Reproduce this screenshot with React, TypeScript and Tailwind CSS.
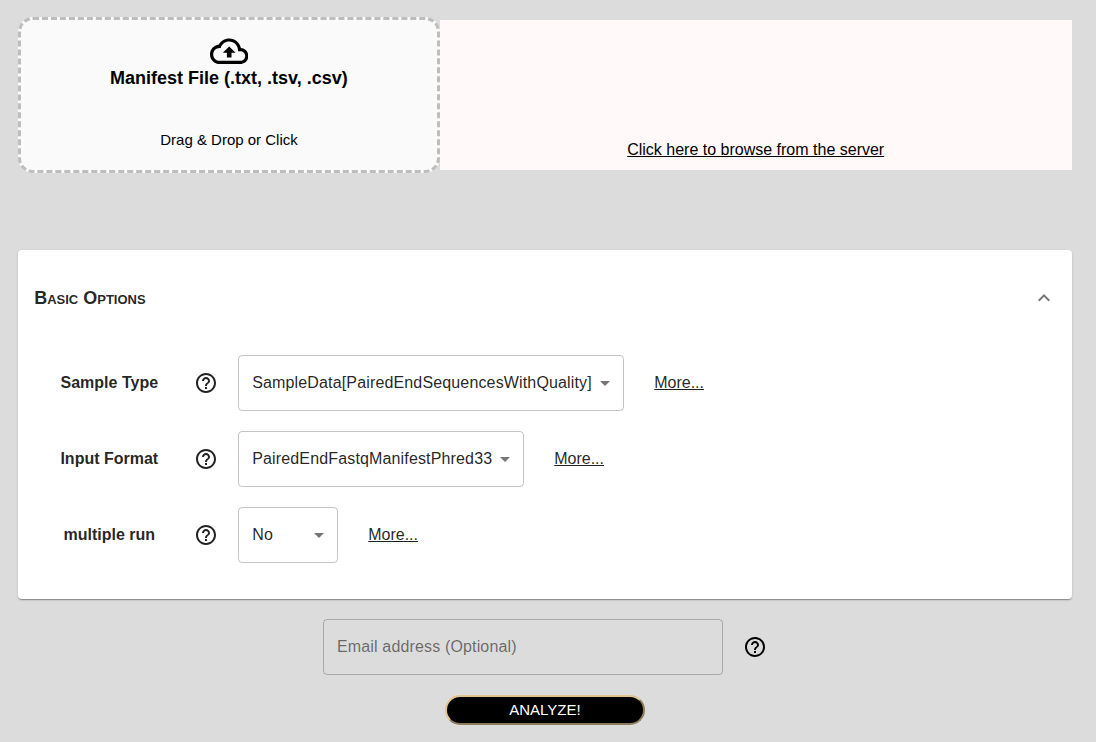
import React from "react";

function Icon({ d, className }: { d: string; className: string }) {
  return (
    <svg viewBox="0 0 24 24" fill="currentColor" aria-hidden="true" className={`shrink-0 ${className}`}>
      <path d={d} />
    </svg>
  );
}

const HELP =
  "M11 18h2v-2h-2v2zm1-16C6.48 2 2 6.48 2 12s4.48 10 10 10 10-4.48 10-10S17.52 2 12 2zm0 18c-4.41 0-8-3.59-8-8s3.59-8 8-8 8 3.59 8 8-3.59 8-8 8zm0-14c-2.21 0-4 1.79-4 4h2c0-1.1.9-2 2-2s2 .9 2 2c0 2-3 1.75-3 5h2c0-2.25 3-2.5 3-5 0-2.21-1.79-4-4-4z";
const CLOUD =
  "M19.35 10.04C18.67 6.59 15.64 4 12 4 9.11 4 6.6 5.64 5.35 8.04 2.34 8.36 0 10.91 0 14c0 3.31 2.69 6 6 6h13c2.76 0 5-2.24 5-5 0-2.64-2.05-4.78-4.65-4.96zM19 18H6c-2.21 0-4-1.79-4-4s1.79-4 4-4h.71C7.37 7.69 9.48 6 12 6c3.04 0 5.5 2.46 5.5 5.5v.5H19c1.66 0 3 1.34 3 3s-1.34 3-3 3zM8 13h2.55v3h2.9v-3H16l-4-4z";
const CHEVRON_UP = "M12 8l-6 6 1.41 1.41L12 10.83l4.59 4.58L18 14z";
const CARET_DOWN = "M7 10l5 5 5-5z";

type Option = { label: string; value: string; width: string };

const options: Option[] = [
  { label: "Sample Type", value: "SampleData[PairedEndSequencesWithQuality]", width: "w-[386px]" },
  { label: "Input Format", value: "PairedEndFastqManifestPhred33", width: "w-[286px]" },
  { label: "multiple run", value: "No", width: "w-[100px]" },
];

function OptionRow({ label, value, width }: Option) {
  return (
    <div className="flex h-14 items-center">
      <span className="w-[150px] pl-[0.6px] text-center font-bold">{label}</span>
      <Icon d={HELP} className="ml-2.5 size-6" />
      <button
        type="button"
        className={`ml-5 flex h-14 items-center justify-between rounded border border-black/[0.23] pr-[6px] pl-[13.2px] tracking-[0.15px] whitespace-nowrap ${width}`}
      >
        <span>{value}</span>
        <Icon d={CARET_DOWN} className="size-6 text-black/[0.54]" />
      </button>
      <a href="#" className="ml-[30.2px] underline">
        More...
      </a>
    </div>
  );
}

export default function App() {
  return (
    <main className="flex h-[742px] flex-col overflow-hidden bg-[#dcdcdc] pr-6 pl-[18px] pt-[17px] font-['Liberation_Sans',Arial,sans-serif] text-base leading-6 text-black">
      <section className="flex h-[156px] items-center">
        <div className="flex h-[156px] w-[422px] shrink-0 flex-col items-center rounded-[15px] border-[3px] border-dashed border-[#bdbdbd] bg-[#fafafa] pt-3">
          <Icon d={CLOUD} className="size-[38.4px]" />
          <h2 className="-mt-[4.4px] pr-[0.4px] text-lg leading-6 font-bold">Manifest File (.txt, .tsv, .csv)</h2>
          <p className="mt-[38px] text-[15px] leading-6">Drag &amp; Drop or Click</p>
        </div>
        <div className="flex h-[150px] flex-1 items-end justify-center bg-[#fff9f9] pr-[0.6px] pb-2">
          <a href="#" className="underline">
            Click here to browse from the server
          </a>
        </div>
      </section>

      <section className="mt-[77px] h-[349px] shrink-0 rounded bg-white px-4 text-black/[0.87] shadow-[0_2px_1px_-1px_rgba(0,0,0,0.2),0_1px_1px_0_rgba(0,0,0,0.14),0_1px_3px_0_rgba(0,0,0,0.12)]">
        <header className="flex h-24 items-center justify-between">
          <h2 className="pl-[0.2px] text-lg font-bold [font-variant:small-caps]">Basic Options</h2>
          <Icon d={CHEVRON_UP} className="size-6 text-black/[0.54]" />
        </header>
        <div className="flex flex-col gap-5 pt-[9px]">
          {options.map((o) => (
            <OptionRow key={o.label} {...o} />
          ))}
        </div>
      </section>

      <form className="mt-5 flex flex-col items-center gap-5">
        <div className="flex w-[444px] items-center gap-5">
          <input
            type="email"
            placeholder="Email address (Optional)"
            className="h-14 w-[400px] rounded border border-black/[0.23] px-[13px] tracking-[0.15px] placeholder:text-black/[0.54]"
          />
          <Icon d={HELP} className="size-6" />
        </div>
        <button
          type="button"
          className="flex h-[30px] w-[200px] items-center justify-center rounded-[15px] border-2 border-[#e2c48c] bg-black text-[15px] text-white [border-style:outset]"
        >
          ANALYZE!
        </button>
      </form>
    </main>
  );
}
